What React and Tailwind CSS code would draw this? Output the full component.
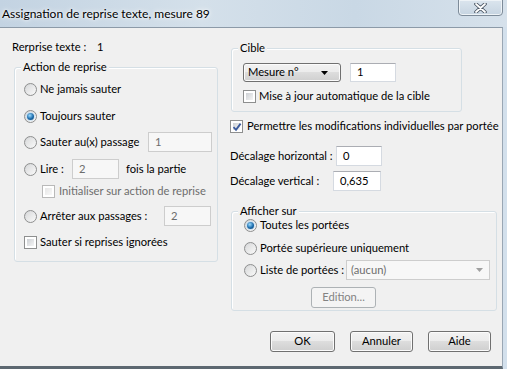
import React from "react";

const Radio = ({ checked }) => (
    <div className="w-[13px] h-[13px] shrink-0 rounded-full border border-[#8e8f8f] bg-linear-to-br from-[#d2d4d6] to-[#fafafa] flex items-center justify-center">
        {checked ? (
            <div className="w-[7px] h-[7px] rounded-full bg-[radial-gradient(circle_at_40%_35%,#9ddcff,#1b6bab_55%,#0d3f6b)] shadow-[0_0_0_1px_#cfe3f2]" />
        ) : (
            <div className="w-[9px] h-[9px] rounded-full bg-linear-to-br from-[#dadbdc] to-[#f7f7f7]" />
        )}
    </div>
);

const Check = ({ checked, disabled }) => (
    <div className={"w-[13px] h-[13px] shrink-0 border bg-white p-[2px] relative " + (disabled ? "border-[#b9b9b9]" : "border-[#8e8f8f]")}>
        <div className={"w-full h-full bg-linear-to-br " + (disabled ? "from-[#e6e6e6] to-[#f8f8f8]" : "from-[#cdd0d4] to-[#f5f5f5]")} />
        {checked && (
            <svg className="absolute left-[1px] top-[1px]" width="10" height="10" viewBox="0 0 10 10">
                <path d="M1.5 5.2 L4 7.8 L8.6 1.6" fill="none" stroke="#3a5a9c" strokeWidth="1.8" />
            </svg>
        )}
    </div>
);

const Input = ({ value, w, disabled }) => (
    <div className={"h-[20px] shrink-0 border flex items-center pl-[6px] " + w + (disabled ? " bg-[#f7f7f7] border-[#cdcdcd] text-[#6d6d6d]" : " bg-white border-[#d5dae1] border-t-[#abadb3]")}>
        {value}
    </div>
);

const Button = ({ label, w, disabled }) => (
    <div className={"h-[21px] rounded-[3px] border flex items-center justify-center " + w + (disabled ? " border-[#adb2b5] bg-[#f4f4f4] text-[#838383]" : " border-[#707070] bg-[linear-gradient(#f2f2f2,#ebebeb_50%,#dddddd_50%,#cfcfcf)] shadow-[inset_0_0_0_1px_#fbfbfb]")}>
        {label}
    </div>
);

const Group = ({ title, className, children }) => (
    <div className={"relative border border-[#d5dfe5] rounded-[3px] shadow-[inset_1px_1px_0_#fff] " + className}>
        <span className="absolute -top-[9px] left-[6px] px-[2px] bg-[#f0f0f0] leading-[16px]">{title}</span>
        {children}
    </div>
);

export default function App() {
    return (
        <div className="w-[507px] h-[369px] flex flex-col overflow-hidden whitespace-nowrap bg-[#d3e0ec] text-[11.2px] text-black" style={{ fontFamily: "Lato, 'Open Sans', sans-serif" }}>
            {/* title bar */}
            <div className="h-[27px] shrink-0 flex items-start justify-between bg-[linear-gradient(90deg,#c3d3e2,#d4e0ea_40%,#c9d8e5_70%,#d6e1eb)]">
                <div className="pl-[2px] pt-[5px] text-[12px] [text-shadow:0_0_6px_#fff,0_0_3px_#fff]">Assignation de reprise texte, mesure 89</div>
                <div className="w-[45px] h-[17px] mr-[4px] -mt-[1px] rounded-b-[4px] border border-[#7d8b99] bg-linear-to-b from-[#dbe5ee] to-[#c6d4e1] shadow-[inset_0_0_0_1px_#eef3f7] flex items-center justify-center">
                    <svg width="13" height="10" viewBox="0 0 13 10">
                        <path d="M2 1 L11 9 M11 1 L2 9" stroke="#4a5563" strokeWidth="3.6" strokeLinecap="round" />
                        <path d="M2 1 L11 9 M11 1 L2 9" stroke="#ffffff" strokeWidth="1.8" strokeLinecap="round" />
                    </svg>
                </div>
            </div>

            {/* client */}
            <div className="flex-1 mr-[4px] border-t border-[#8c9aa8] border-r border-r-[#9aa7b4] border-b-[3px] border-b-[#5d6871] bg-[#f0f0f0] flex flex-col">
                <div className="h-[283px] flex">
                    {/* left column */}
                    <div className="ml-[10px] w-[208px] flex flex-col">
                        <div className="mt-[9px] h-[20px] flex items-center pl-[2px]">
                            <span className="w-[85px]">Rerprise texte :</span>
                            <span>1</span>
                        </div>
                        <Group title="Action de reprise" className="mt-[10px] ml-[4px] w-[204px] h-[195px] pl-[9px] flex flex-col">
                            <div className="mt-[11px] h-[20px] flex items-center gap-[3px]">
                                <Radio /> <span>Ne jamais sauter</span>
                            </div>
                            <div className="mt-[7px] h-[20px] flex items-center gap-[3px]">
                                <Radio checked /> <span>Toujours sauter</span>
                            </div>
                            <div className="mt-[6px] h-[20px] flex items-center gap-[3px]">
                                <Radio /> <span className="w-[105px]">Sauter au(x) passage</span>
                                <Input value="1" w="w-[64px]" disabled />
                            </div>
                            <div className="mt-[7px] h-[20px] flex items-center gap-[3px]">
                                <Radio /> <span className="w-[29px]">Lire :</span>
                                <Input value="2" w="w-[47px]" disabled />
                                <span className="ml-[4px]">fois la partie</span>
                            </div>
                            <div className="mt-[2px] h-[20px] flex items-center gap-[4px] pl-[18px] text-[#6d6d6d]">
                                <Check disabled /> <span>Initialiser sur action de reprise</span>
                            </div>
                            <div className="mt-[5px] h-[20px] flex items-center gap-[3px]">
                                <Radio /> <span className="w-[121px]">Arrêter aux passages :</span>
                                <Input value="2" w="w-[47px]" disabled />
                            </div>
                            <div className="mt-[6px] h-[20px] flex items-center gap-[3px]">
                                <Check /> <span>Sauter si reprises ignorées</span>
                            </div>
                        </Group>
                    </div>

                    {/* right column */}
                    <div className="ml-[12px] w-[267px] flex flex-col">
                        <Group title="Cible" className="mt-[20px] ml-[1px] w-[231px] h-[64px] pl-[11px] flex flex-col">
                            <div className="mt-[14px] h-[19px] flex items-center gap-[9px]">
                                <div className="w-[98px] h-[19px] rounded-[3px] border border-[#707070] bg-[linear-gradient(#f2f2f2,#ebebeb_50%,#dddddd_50%,#cfcfcf)] shadow-[inset_0_0_0_1px_#fbfbfb] flex items-center justify-between pl-[4px] pr-[12px]">
                                    <span>Mesure n°</span>
                                    <svg width="7" height="4" viewBox="0 0 7 4"><path d="M0 0 L7 0 L3.5 4 Z" fill="#000" /></svg>
                                </div>
                                <div className="h-[19px] w-[46px] bg-white border border-[#d5dae1] border-t-[#abadb3] flex items-center pl-[6px]">1</div>
                            </div>
                            <div className="mt-[6px] h-[16px] flex items-center gap-[3px]">
                                <Check /> <span>Mise à jour automatique de la cible</span>
                            </div>
                        </Group>
                        <div className="mt-[6px] h-[16px] flex items-center gap-[4px]">
                            <Check checked /> <span>Permettre les modifications individuelles par portée</span>
                        </div>
                        <div className="mt-[12px] h-[20px] flex items-center">
                            <span className="w-[106px]">Décalage horizontal :</span>
                            <Input value="0" w="w-[46px]" />
                        </div>
                        <div className="mt-[5px] h-[20px] flex items-center">
                            <span className="w-[103px]">Décalage vertical :</span>
                            <Input value="0,635" w="w-[48px]" />
                        </div>
                        <Group title="Afficher sur" className="mt-[20px] ml-[1px] w-[266px] h-[100px] pl-[12px] flex flex-col">
                            <div className="mt-[5px] h-[16px] flex items-center gap-[3px]">
                                <Radio checked /> <span>Toutes les portées</span>
                            </div>
                            <div className="mt-[7px] h-[16px] flex items-center gap-[3px]">
                                <Radio /> <span>Portée supérieure uniquement</span>
                            </div>
                            <div className="mt-[4px] h-[20px] flex items-center gap-[3px]">
                                <Radio /> <span className="w-[83px]">Liste de portées :</span>
                                <div className="w-[144px] h-[20px] border border-[#cdcdcd] bg-[#f7f7f7] flex items-center justify-between pl-[4px] pr-[6px] text-[#6d6d6d]">
                                    <span>(aucun)</span>
                                    <svg width="7" height="4" viewBox="0 0 7 4"><path d="M0 0 L7 0 L3.5 4 Z" fill="#a0a0a0" /></svg>
                                </div>
                            </div>
                            <div className="mt-[7px] ml-[67px]">
                                <Button label="Edition..." w="w-[65px]" disabled />
                            </div>
                        </Group>
                    </div>
                </div>

                {/* bottom buttons */}
                <div className="mt-[20px] flex justify-end pr-[11px] gap-[15px]">
                    <Button label="OK" w="w-[65px]" />
                    <Button label="Annuler" w="w-[63px]" />
                    <Button label="Aide" w="w-[63px]" />
                </div>
            </div>
        </div>
    );
}
